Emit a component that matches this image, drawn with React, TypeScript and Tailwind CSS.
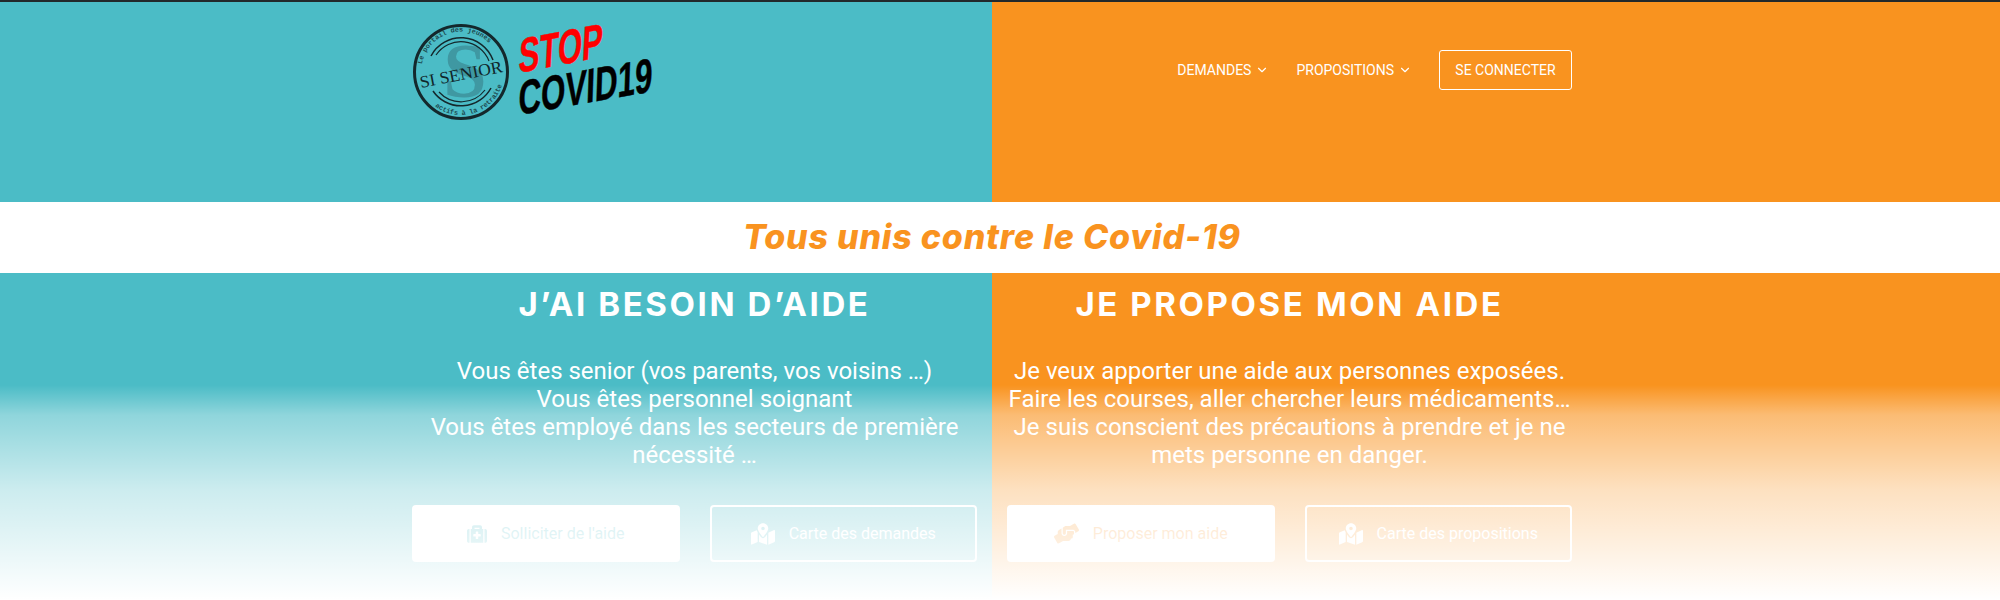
import { ChevronDown } from 'lucide-react';
import { FaHandsHelping, FaMapMarkedAlt, FaMedkit } from 'react-icons/fa';
import type { ReactNode } from 'react';

function Logo() {
  return (
    <svg width="250" height="110" viewBox="0 0 250 110" className="block" aria-label="Si Senior Stop Covid19">
      <defs>
        <path id="stamp-top" d="M 8.8 46.2 A 40 40 0 0 1 83 34" fill="none" />
        <path id="stamp-bottom" d="M 22 88.3 A 43 43 0 0 0 91 54" fill="none" />
      </defs>
      <g transform="translate(1 -2)">
        <circle cx="48" cy="54" r="46.5" fill="none" stroke="#14282c" strokeWidth="3" />
        <text x="52" y="79" textAnchor="middle" fontFamily="'Liberation Serif', serif" fontWeight="700" fontSize="78" fill="#3f98a2">S</text>
        <path d="M 18 38 A 34 34 0 0 1 80 42" fill="none" stroke="#14282c" strokeWidth="1.5" />
        <path d="M 23 37 A 30 30 0 0 1 76 43" fill="none" stroke="#14282c" strokeWidth="1.2" />
        <path d="M 20 73 A 34 34 0 0 0 78 70" fill="none" stroke="#14282c" strokeWidth="1.5" />
        <path d="M 26 74 A 30 30 0 0 0 72 72" fill="none" stroke="#14282c" strokeWidth="1.2" />
        <text fontFamily="'Liberation Mono', monospace" fontSize="6.8" fill="#1c4a50" fontWeight="700">
          <textPath href="#stamp-top">Le portail des jeunes</textPath>
        </text>
        <text fontFamily="'Liberation Mono', monospace" fontSize="6.8" fill="#1c4a50" fontWeight="700">
          <textPath href="#stamp-bottom">actifs à la retraite</textPath>
        </text>
        <text
          x="48"
          y="62"
          transform="rotate(-11 48 56)"
          textAnchor="middle"
          fontFamily="'Liberation Serif', serif"
          fontSize="17"
          fill="#10262a"
          textLength="84"
          lengthAdjust="spacingAndGlyphs"
        >
          SI SENIOR
        </text>
      </g>
      <text
        transform="translate(106 53) skewY(-11) skewX(-3)"
        fontFamily="'Liberation Sans', sans-serif"
        fontWeight="700"
        fontSize="48"
        fill="#ff0000"
        stroke="#ff0000"
        strokeWidth="0.5"
        textLength="84"
        lengthAdjust="spacingAndGlyphs"
      >
        STOP
      </text>
      <text
        transform="translate(106 95) skewY(-10) skewX(-2)"
        fontFamily="'Liberation Sans', sans-serif"
        fontWeight="700"
        fontSize="48"
        fill="#000000"
        stroke="#000000"
        strokeWidth="0.5"
        textLength="134"
        lengthAdjust="spacingAndGlyphs"
      >
        COVID19
      </text>
    </svg>
  );
}

function NavItem({ label }: { label: string }) {
  return (
    <span className="flex items-center gap-1 text-sm text-white uppercase">
      {label}
      <ChevronDown size={14} strokeWidth={2} />
    </span>
  );
}

function ActionButton({ icon, label, solid, color }: { icon: ReactNode; label: string; solid?: boolean; color?: string }) {
  if (solid) {
    return (
      <button type="button" className={`flex h-[57px] items-center justify-center gap-[14px] rounded bg-white text-base ${color}`}>
        {icon}
        {label}
      </button>
    );
  }
  return (
    <button type="button" className="flex h-[57px] items-center justify-center gap-[14px] rounded border-2 border-white text-base text-white">
      {icon}
      {label}
    </button>
  );
}

function HelpColumn({ title, lines, children }: { title: string; lines: string[]; children: ReactNode }) {
  return (
    <div className="w-[595px] px-[15px] text-center text-white">
      <h2 className="mt-[5px] font-['Inter',sans-serif] text-[33px] leading-[52px] font-bold tracking-[2.6px]">{title}</h2>
      <p className="mt-[27px] text-2xl leading-7">
        {lines.map((line) => (
          <span key={line} className="block">{line}</span>
        ))}
      </p>
      <div className="mt-9 grid grid-cols-2 gap-[30px]">{children}</div>
    </div>
  );
}

export default function App() {
  return (
    <div className="relative h-[600px] overflow-hidden border-t-2 border-[#22292b] font-['Roboto',sans-serif]">
      <header className="flex h-[200px]">
        <div className="flex w-[992px] justify-end bg-[#4bbcc6]">
          <div className="w-[595px] px-[15px] pt-[18px]">
            <Logo />
          </div>
        </div>
        <div className="flex-1 bg-[#f9931f]">
          <nav className="flex w-[595px] items-center justify-end gap-[27px] px-[15px] pt-[48px]">
            <NavItem label="Demandes" />
            <NavItem label="Propositions" />
            <a className="flex h-[40px] w-[133px] items-center justify-center rounded-[3px] border border-white text-sm text-white uppercase">
              Se connecter
            </a>
          </nav>
        </div>
      </header>

      <div className="flex h-[71px] items-center justify-center bg-white pr-4 pb-[2px]">
        <h1 className="font-['Inter',sans-serif] text-[34px] font-extrabold tracking-[0.8px] text-[#f9931f] italic">Tous unis contre le Covid-19</h1>
      </div>

      <main className="flex h-[327px]">
        <div className="flex w-[992px] justify-end bg-[#4bbcc6]">
          <HelpColumn
            title="J’AI BESOIN D’AIDE"
            lines={['Vous êtes senior (vos parents, vos voisins …)', 'Vous êtes personnel soignant', 'Vous êtes employé dans les secteurs de première', 'nécessité …']}
          >
            <ActionButton solid color="text-[#4bbcc6]" icon={<FaMedkit size={20} />} label="Solliciter de l'aide" />
            <ActionButton icon={<FaMapMarkedAlt size={24} />} label="Carte des demandes" />
          </HelpColumn>
        </div>
        <div className="flex-1 bg-[#f9931f]">
          <HelpColumn
            title="JE PROPOSE MON AIDE"
            lines={['Je veux apporter une aide aux personnes exposées.', 'Faire les courses, aller chercher leurs médicaments…', 'Je suis conscient des précautions à prendre et je ne', 'mets personne en danger.']}
          >
            <ActionButton solid color="text-[#f9931f]" icon={<FaHandsHelping size={25} />} label="Proposer mon aide" />
            <ActionButton icon={<FaMapMarkedAlt size={24} />} label="Carte des propositions" />
          </HelpColumn>
        </div>
      </main>

      <div className="pointer-events-none absolute inset-x-0 top-[383px] h-[215px] bg-[linear-gradient(to_bottom,rgba(255,255,255,0)_0%,rgba(255,255,255,0.38)_14%,rgba(255,255,255,0.72)_49%,rgba(255,255,255,1)_100%)]" />
    </div>
  );
}
